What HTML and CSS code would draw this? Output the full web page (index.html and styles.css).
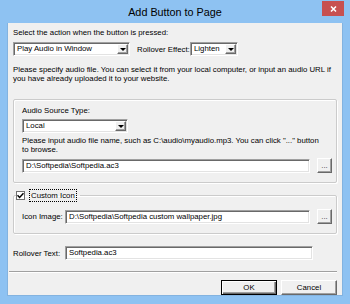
FILE: index.html
```html
<!DOCTYPE html>
<html lang="en">
<head>
    <meta charset="UTF-8">
    <title>Add Button to Page</title>
    <link rel="stylesheet" href="styles.css">
</head>
<body>
    <div class="window">
        <div class="titlebar">
            <span class="title">Add Button to Page</span>
            <span class="close">
                <svg width="7" height="6" viewBox="0 0 7 6"><path d="M1 0.5 L6 5.5 M6 0.5 L1 5.5" stroke="#fff" stroke-width="1.5"/></svg>
            </span>
        </div>
        <div class="client">
            <div class="content">
                <div class="text">Select the action when the button is pressed:</div>
                <div class="action-row">
                    <div class="combo combo-action"><span class="combo-text">Play Audio in Window</span><span class="combo-btn"><i class="arrow"></i></span></div>
                    <span class="text effect-label">Rollover Effect:</span>
                    <div class="combo combo-effect"><span class="combo-text">Lighten</span><span class="combo-btn"><i class="arrow"></i></span></div>
                </div>
                <div class="text para">Please specify audio file. You can select it from your local computer, or input an audio URL if<br>you have already uploaded it to your website.</div>

                <div class="group group-source">
                    <div class="text">Audio Source Type:</div>
                    <div class="combo combo-source"><span class="combo-text">Local</span><span class="combo-btn"><i class="arrow"></i></span></div>
                    <div class="text hint">Please input audio file name, such as C:\audio\myaudio.mp3. You can click "..." button<br>to browse.</div>
                    <div class="file-row">
                        <div class="field">D:\Softpedia\Softpedia.ac3</div>
                        <div class="btn btn-browse">...</div>
                    </div>
                </div>

                <fieldset class="group group-icon">
                    <legend>
                        <span class="checkbox"><svg width="7" height="7" viewBox="0 0 7 7"><path d="M0.5 3.2 L2.6 5.4 L6.5 1.2" fill="none" stroke="#000" stroke-width="1.5"/></svg></span>
                        <span class="focus-label">Custom Icon</span>
                    </legend>
                    <div class="file-row">
                        <span class="text field-label">Icon Image:</span>
                        <div class="field">D:\Softpedia\Softpedia custom wallpaper.jpg</div>
                        <div class="btn btn-browse">...</div>
                    </div>
                </fieldset>

                <div class="rollover-row">
                    <span class="text rollover-label">Rollover Text:</span>
                    <div class="field field-rollover">Softpedia.ac3</div>
                </div>
            </div>
            <div class="separator"></div>
            <div class="buttons">
                <div class="btn btn-ok">OK</div>
                <div class="btn btn-cancel">Cancel</div>
            </div>
        </div>
    </div>
</body>
</html>
```

FILE: styles.css
```css
* {
    box-sizing: border-box;
}
body {
    margin: 0;
    font-family: "Liberation Sans", Arial, sans-serif;
    font-size: 7.8px;
    color: #000;
    background: #8ec2f2;
}
.window {
    width: 350px;
    height: 304px;
    background: #8ec2f2;
    padding: 0 7px 9px;
    display: flex;
    flex-direction: column;
}
.titlebar {
    height: 23px;
    margin: 0 -7px;
    display: grid;
    grid-template-columns: 1fr auto 1fr;
    align-items: start;
}
.title {
    grid-column: 2;
    font-size: 10.8px;
    line-height: 24px;
    color: #000;
}
.close {
    grid-column: 3;
    justify-self: end;
    width: 22px;
    height: 15px;
    margin: 1px 6px 0 0;
    background: #c75050;
    display: flex;
    align-items: center;
    justify-content: center;
}
.client {
    flex: 1;
    background: #f0f0f0;
    border: 1px solid #83b3e0;
    border-top: none;
}
.content {
    padding: 5px 5px 0 5px;
}
.text {
    line-height: 9px;
    white-space: nowrap;
}

/* combo boxes and fields */
.combo,
.field {
    height: 14px;
    background: #fff;
    border: 1px solid;
    border-color: #a0a0a0 #fff #fff #a0a0a0;
    box-shadow: inset 1px 1px 0 #696969, inset -1px -1px 0 #e3e3e3;
    padding: 1px;
    display: flex;
    align-items: center;
    white-space: nowrap;
    overflow: hidden;
}
.field {
    padding-left: 3px;
    line-height: 10px;
}
.combo-text {
    flex: 1;
    padding-left: 2px;
    line-height: 10px;
}
.combo-btn {
    width: 11px;
    height: 10px;
    background: #f0f0f0;
    border: 1px solid;
    border-color: #fff #696969 #696969 #fff;
    box-shadow: inset -1px -1px 0 #a0a0a0;
    display: flex;
    align-items: center;
    justify-content: center;
}
.arrow {
    width: 0;
    height: 0;
    border-left: 3px solid transparent;
    border-right: 3px solid transparent;
    border-top: 3px solid #000;
}

.action-row {
    display: flex;
    align-items: center;
    margin-top: 5px;
}
.combo-action {
    width: 117px;
}
.effect-label {
    margin-left: 7px;
    width: 53px;
}
.combo-effect {
    width: 48px;
}
.para {
    margin-top: 9px;
}

/* group boxes */
.group {
    border: 1px solid #cbcbcb;
    border-radius: 2px;
    box-shadow: inset 1px 1px 0 #fff, 1px 1px 0 #fff;
}
.group-source {
    margin-top: 16px;
    padding: 6px 4px 9px 8px;
}
.combo-source {
    width: 106px;
    margin-top: 4px;
}
.hint {
    margin-top: 3px;
}
.file-row {
    display: flex;
    align-items: center;
    margin-top: 4px;
}
.file-row .field {
    flex: 1;
}
.btn {
    background: #f0f0f0;
    border: 1px solid;
    border-color: #fff #696969 #696969 #fff;
    box-shadow: inset -1px -1px 0 #a0a0a0;
    display: flex;
    align-items: center;
    justify-content: center;
    line-height: 9px;
}
.btn-browse {
    width: 15px;
    height: 15px;
    margin-left: 7px;
    align-items: flex-end;
    padding-bottom: 2px;
    color: #333;
}

.group-icon {
    margin: 6px 0 0;
    padding: 8px 4px 9px 8px;
    min-width: 0;
}
.group-icon legend {
    margin-left: -6px;
    padding: 0 3px 0 0;
    height: 12px;
    display: flex;
    align-items: center;
}
.checkbox {
    width: 9px;
    height: 9px;
    background: #fff;
    border: 1px solid #707070;
    display: flex;
    align-items: center;
    justify-content: center;
}
.focus-label {
    margin-left: 4px;
    padding: 1px 1px;
    line-height: 9px;
    border: 1px dotted #000;
}
.group-icon .file-row {
    margin-top: 0;
}
.field-label {
    width: 43px;
}

.rollover-row {
    display: flex;
    align-items: center;
    margin-top: 12px;
}
.rollover-label {
    width: 52px;
}
.field-rollover {
    width: 248px;
}

.separator {
    margin: 11px 5px 0 1px;
    height: 2px;
    border-top: 1px solid #a0a0a0;
    border-bottom: 1px solid #fff;
}
.buttons {
    display: flex;
    justify-content: flex-end;
    gap: 4px;
    margin-top: 7px;
    padding-right: 5px;
}
.buttons .btn {
    width: 56px;
    height: 15px;
}
.btn-ok {
    border: 1px solid #000;
    box-shadow: inset 1px 1px 0 #fff, inset -1px -1px 0 #696969, inset -2px -2px 0 #a0a0a0;
}
```
